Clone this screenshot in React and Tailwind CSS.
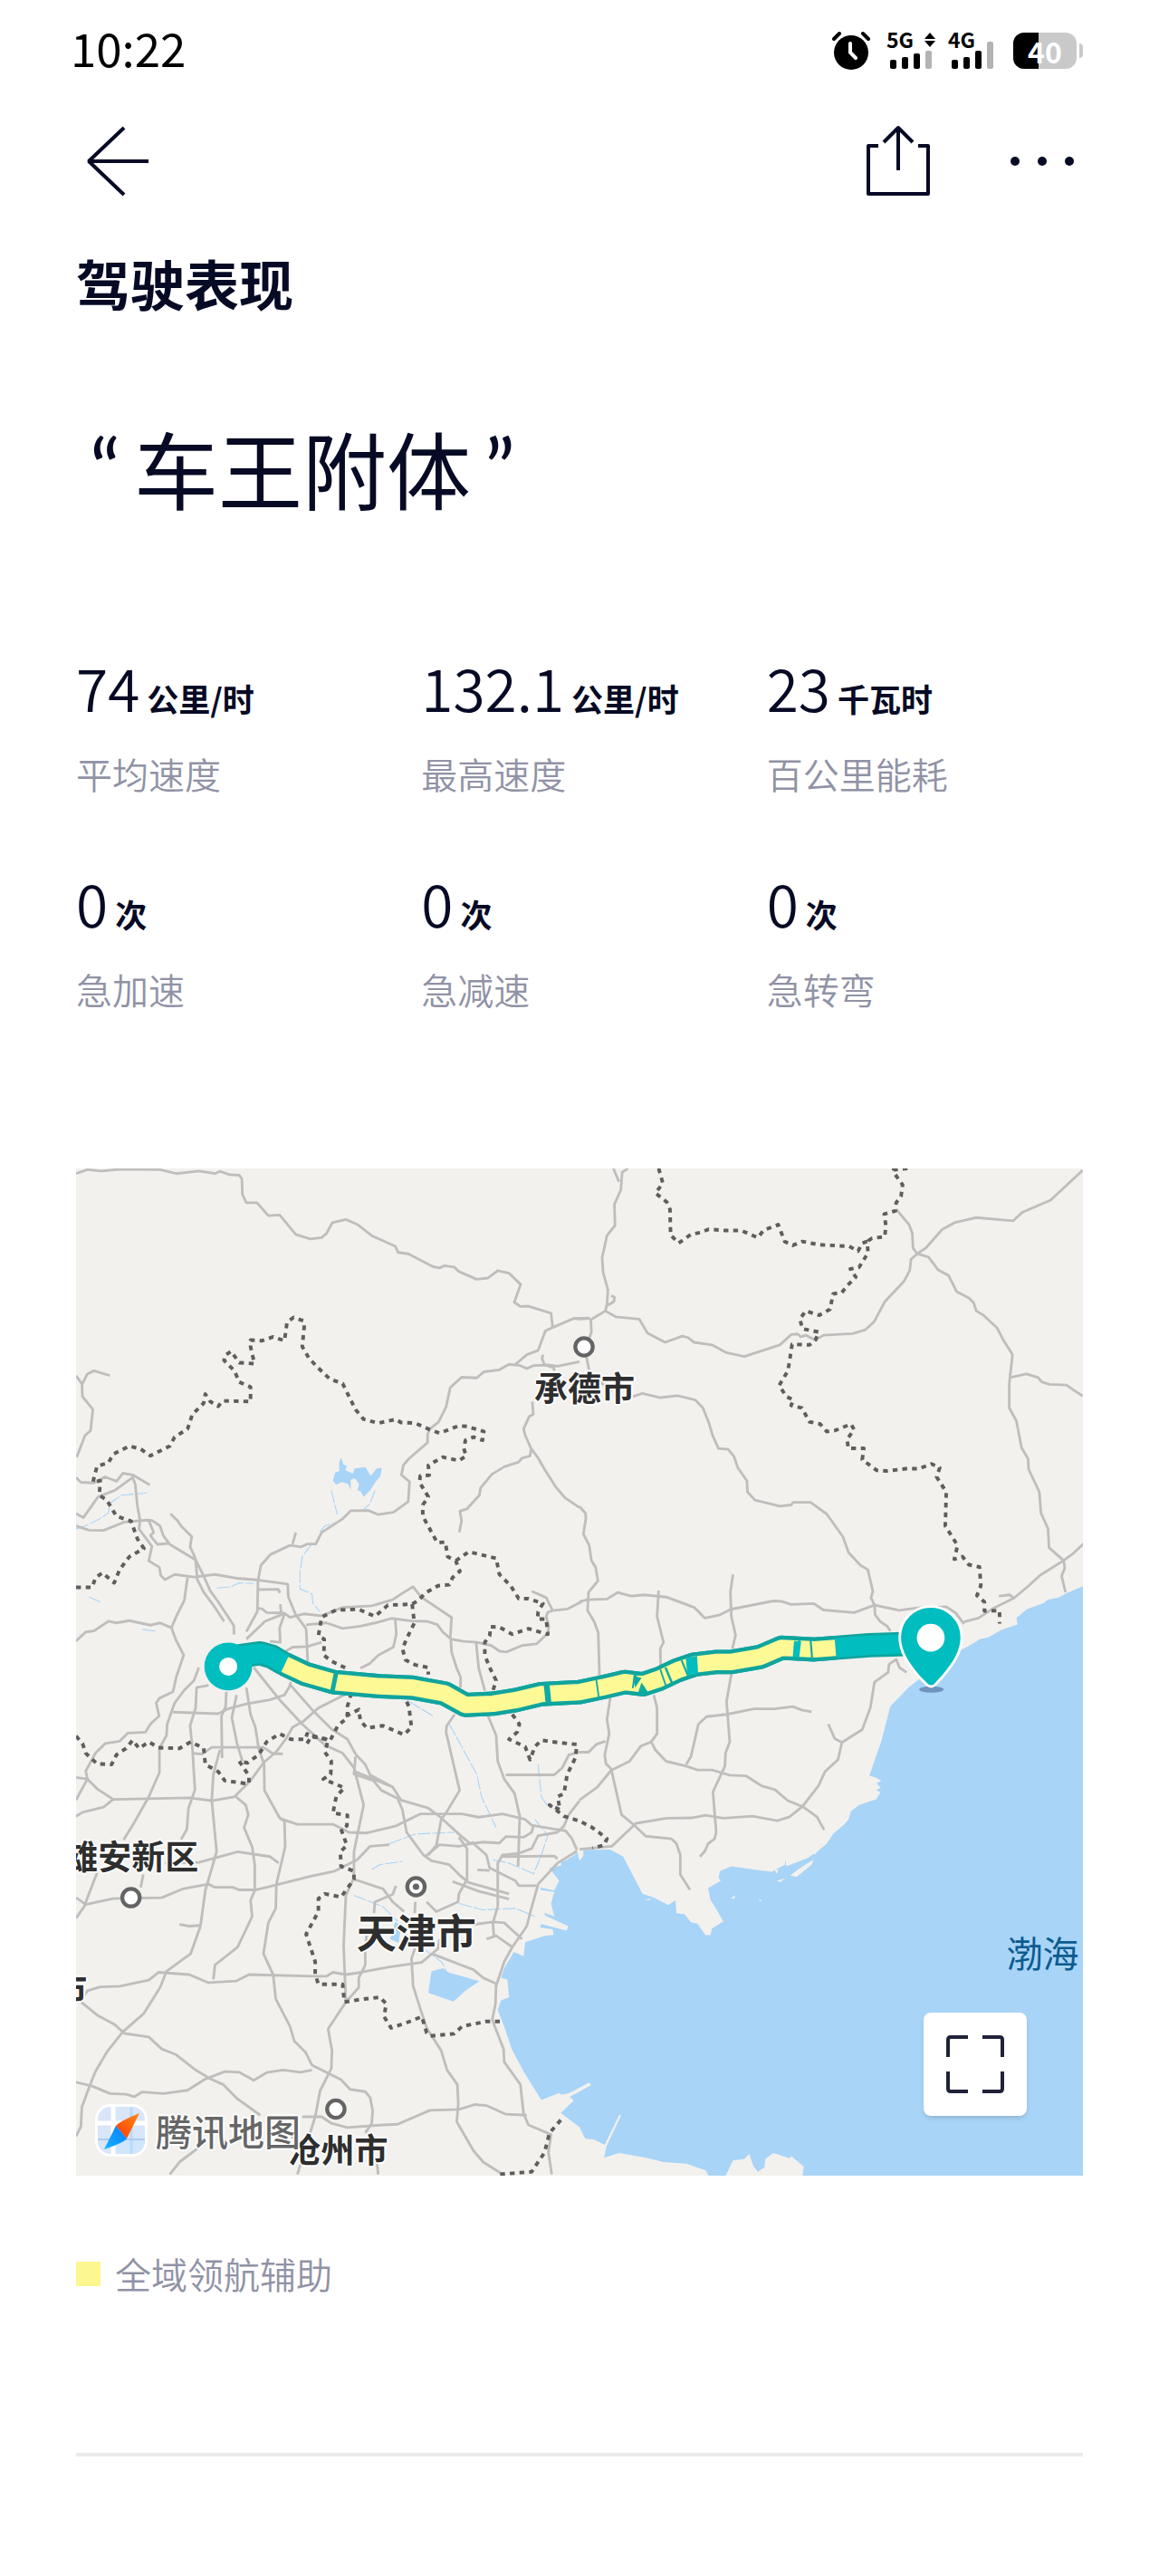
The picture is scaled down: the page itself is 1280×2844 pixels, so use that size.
import React from "react";

const FONT = "font-['Noto_Sans_CJK_SC','Noto_Sans',sans-serif]";

const STATS = [
  { value: "74", unit: "公里/时", label: "平均速度" },
  { value: "132.1", unit: "公里/时", label: "最高速度" },
  { value: "23", unit: "千瓦时", label: "百公里能耗" },
  { value: "0", unit: "次", label: "急加速" },
  { value: "0", unit: "次", label: "急减速" },
  { value: "0", unit: "次", label: "急转弯" },
];

/* ---------- Map data: polylines per tile (north-west, north-east, south-west, south-east) ---------- */

const TILES = [
  { key: "nw", x: 0, y: 0 },
  { key: "ne", x: 1568, y: 0 },
  { key: "sw", x: 0, y: 1568 },
  { key: "se", x: 1568, y: 1568 },
];

const ROADS = {
  nw: [
    "10,40 45,28 90,32 150,26 270,28 320,40 390,32 440,40 455,33 485,43 515,45 523,55 525,105 537,130 570,130 605,170 640,168 690,228 735,242 770,238 785,225 803,192 845,182 880,197 925,232 998,265 1007,284 1038,288 1115,328 1135,332 1150,325 1180,329 1195,343 1250,367 1285,363 1315,340 1350,348 1386,383 1366,438 1385,451 1410,450 1480,472 1485,516",
    "1600,488 1568,490 1550,488 1485,516 1462,527 1440,587 1405,600 1370,630",
    "1568,622 1500,636 1470,632 1425,634 1405,643 1385,634 1350,630 1320,647 1272,653 1250,672 1203,670 1168,702 1155,762 1132,808 1105,830 1098,845 1098,872 1040,922 1023,942 1017,972 1042,993 1038,1055 992,1088 945,1095 915,1082 860,1083 835,1108 770,1150 752,1186 725,1186 706,1195 672,1190 612,1218 582,1252 573,1300 571,1395 537,1457",
    "690,1150 680,1186",
    "1455,600 1452,612 1460,632 1488,640 1490,650",
    "1422,745 1425,785 1412,792 1395,830 1400,850 1418,890 1440,920 1460,955 1495,1010 1523,1043 1568,1073",
    "1418,893 1415,913 1390,920 1380,932 1335,947 1297,970 1262,1012 1258,1035 1220,1077 1198,1084 1203,1115 1196,1150",
    "10,665 28,690 30,730 62,770 55,835 38,850 12,917",
    "28,693 45,660 65,650 115,665",
    "10,980 25,995 65,997 100,978 135,992 155,967 185,972 238,1003",
    "10,1092 33,1104 78,1040 130,1020 185,980 193,1000 200,1070 208,1112 205,1140 245,1193 235,1238 268,1258 272,1283 285,1296 315,1280 375,1288 440,1280 508,1292 571,1297 665,1310 667,1350 690,1405 722,1448",
    "10,1130 50,1143 95,1144 160,1118 230,1112 245,1113 270,1130 280,1160 300,1187 380,1235",
    "235,1113 250,1150 240,1160 262,1187 295,1184",
    "302,1092 325,1115 335,1130 368,1163 363,1195 375,1220 380,1235 385,1295 405,1335 435,1375 468,1425",
    "380,1235 405,1285 425,1330 448,1362 498,1438 499,1466",
    "355,1290 345,1360 320,1410 305,1445 318,1480 343,1530 330,1568",
    "10,1486 40,1458 65,1455 110,1425 135,1430 175,1423 240,1437 270,1430 305,1445",
    "571,1327 636,1326 641,1337",
    "571,1385 585,1386 600,1398 655,1400 672,1413 715,1402 770,1408 835,1382 925,1377 990,1358 1017,1340 1053,1318 1078,1350 1172,1413 1168,1480",
    "642,1372 645,1400",
    "722,1436 785,1430 835,1447 890,1440 935,1430 985,1416 1050,1424 1095,1425 1128,1435 1145,1458 1170,1480 1210,1487 1250,1490 1295,1500 1320,1517 1342,1520 1390,1500 1435,1495 1470,1462 1473,1440 1465,1410 1470,1397 1485,1392 1530,1387 1575,1364",
    "722,1448 727,1550",
    "655,1402 640,1445 642,1490 610,1487",
    "537,1480 595,1425 650,1403",
    "655,1520 680,1505 725,1503 770,1490",
    "998,1420 1001,1465 992,1505 945,1530 920,1555 890,1570",
    "1420,1332 1465,1352 1485,1392",
    "1170,1480 1172,1520 1188,1570 1200,1598 1200,1630",
    "1248,1490 1256,1570 1275,1640",
  ],
  ne: [
    "105,24 122,65",
    "150,24 132,36 128,90 108,135 110,200 85,232 70,300 73,345 88,400 85,445 80,465 35,492 37,530 30,550",
    "-18,488 32,487",
    "80,465 112,483 185,490 210,533 265,562 318,543 335,547 355,562 410,570 455,594 510,606 620,570 655,538 675,536 685,545 700,540 730,555 755,540 845,535 885,523 912,498 945,436 1005,372 1022,340 1026,305 1045,288 1072,270 1122,213 1160,192 1228,176 1342,186 1370,160 1458,122 1557,30",
    "98,418 108,422 107,435 88,447",
    "980,150 1020,198 1030,225 1032,270 1045,288 1080,298 1110,338 1142,355 1167,405 1205,425 1220,440 1228,465 1250,478 1292,517 1310,552 1340,600 1330,690 1330,765 1352,805 1368,888 1388,922 1390,955 1423,1025 1428,1090 1450,1138 1453,1197 1498,1237 1502,1260 1492,1285 1504,1335",
    "1335,670 1383,660 1418,670 1430,684 1455,692 1507,694 1530,710 1557,728",
    "1560,1185 1528,1215 1498,1237 1425,1283 1390,1315 1345,1353 1280,1385 1235,1415 1190,1427",
    "985,1392 1040,1384 1135,1380 1165,1400 1190,1433",
    "1298,1347 1330,1343 1345,1353",
    "20,600 30,650 60,680 100,715",
    "165,730 195,720 250,733 303,727 358,740 382,765 400,810 412,850 430,890 460,893 478,915 490,950 518,990 520,1025 543,1050 620,1069 655,1065 662,1057 715,1057 765,1093 815,1163 833,1213 870,1252 892,1265 908,1332 902,1352 913,1375 915,1405 930,1425 952,1440 962,1455",
    "0,1070 18,1090 20,1105 12,1155 30,1190 37,1237 50,1258 57,1300 28,1335 25,1392 45,1425 58,1460 62,1600",
    "0,1364 25,1358 85,1356 118,1336 160,1347 200,1343 268,1350 355,1382 388,1415 435,1405 468,1388 600,1362 625,1363 655,1373 725,1370 755,1390 850,1398 913,1375 985,1390",
    "245,1330 240,1410 260,1490 250,1510 252,1600",
    "475,1280 467,1335 470,1410 483,1468 473,1510",
  ],
  sw: [
    "330,0 320,30 310,75 268,95 258,110 267,150 240,175 225,200 170,203 145,228 100,235 70,265 40,320 45,345 10,410",
    "390,0 375,40 345,70 315,110 292,175 290,210 268,250 268,325 235,400 190,480 157,533",
    "420,55 383,62 380,125 363,180 370,250 378,378 358,435 353,500 335,532",
    "475,75 473,120 460,150 462,280",
    "507,85 492,155 508,235 525,290",
    "537,62 550,145 565,185 575,250 592,300 593,380 640,465 655,475 657,555 630,670 628,745 605,790 590,885 620,950 628,1025 672,1110 685,1155 720,1190 740,1230 830,1275 858,1305 905,1312 920,1330 928,1370 925,1410 905,1440",
    "310,138 450,143 480,128 540,112 610,100 655,85 670,60 675,45",
    "560,0 640,100 710,175 780,240 835,265 870,310 900,425 870,570 870,650",
    "670,50 740,130 800,190 850,222 875,268 905,300 920,332 990,370 1015,410 1100,435 1140,465 1200,520 1230,545 1240,540",
    "850,80 800,105 760,125 715,165 680,185 660,220 630,260 590,295 550,350 500,400 430,412 360,403 125,408 75,375 45,345 10,340",
    "125,408 95,432 30,448 10,460",
    "650,267 620,267 590,247 430,247 400,268 370,265",
    "455,255 435,330 430,410 445,570 410,690 395,800 365,885 290,940 270,990 220,1070 155,1127 105,1190 70,1250 50,1300 28,1360 25,1420 10,1450",
    "505,400 535,425 543,455 530,495 555,555 563,610 563,690 550,720 555,770 510,865 440,920 435,965",
    "330,795 360,800 395,798",
    "285,605 390,603 510,570 610,585 637,605",
    "10,712 40,733 125,715 275,712 340,685 420,670 440,680 495,680 515,688 565,688 600,680 740,645 810,630 880,595 920,553 980,548",
    "75,635 50,700 35,740 10,775",
    "218,640 210,680",
    "640,467 695,485 805,485 855,510 910,512 1000,490 1075,453 1205,453 1255,463 1330,453 1400,470 1420,488 1490,500 1525,505 1545,530 1560,565",
    "875,275 870,330 930,350 955,380 1005,405 1020,440 1033,510 1085,580 1110,598 1165,610 1200,645 1225,665 1350,700",
    "870,320 930,345 990,370",
    "1175,662 1255,692 1350,716",
    "870,655 960,685 990,725 1025,755",
    "1000,675 990,702 935,725 932,760",
    "1090,585 1135,548 1195,553 1230,545 1270,540 1320,543 1340,523 1395,525 1420,510 1425,490",
    "1195,525 1220,560 1220,655 1195,700 1192,725 1125,755 1095,725",
    "1060,725 1058,760",
    "1060,865 1048,900 1053,985 1080,1070 1095,1115 1140,1185 1158,1245 1190,1290 1193,1350 1188,1405 1240,1495 1270,1530 1330,1568",
    "1235,540 1280,580 1290,620 1370,660 1380,675 1435,675",
    "1252,626 1290,628",
    "1310,985 1335,910 1360,865 1405,800 1415,760 1440,670 1500,605 1560,568",
    "1500,510 1440,520 1420,560 1380,575 1330,580 1315,605 1315,740 1300,790 1303,830",
    "1330,585 1490,583 1500,592",
    "1240,795 1300,787 1335,790 1390,840",
    "1280,840 1310,830 1360,865",
    "870,650 845,705 838,860 845,1035 790,1118 802,1185 800,1240 765,1310 750,1390 725,1470 695,1568",
    "910,820 905,870 905,920 885,960 885,990 845,1035",
    "25,1030 45,1000 85,988 145,986 235,967 265,943 360,950 420,975 505,970 545,950 745,955 785,955 805,943 845,950 880,945 975,927 1080,912 1130,870 1135,840",
    "1110,885 1240,935 1270,960 1310,978 1308,1040 1298,1090 1333,1180 1335,1220 1385,1290 1395,1380 1410,1415 1480,1445 1472,1500 1482,1568",
    "20,1030 75,1075 130,1105 160,1132 235,1143 275,1180 320,1198 380,1245 425,1272 465,1290 510,1335 580,1385",
    "10,1283 60,1295 115,1318 165,1320 190,1328 215,1313 280,1318 355,1308 410,1273 470,1250 515,1252 560,1277 600,1253 650,1245 705,1252 740,1245",
    "710,1390 770,1390 800,1410 850,1423 960,1415 1005,1413 1105,1370 1195,1367 1245,1352 1280,1355 1340,1382 1405,1385",
    "390,1485 330,1530 300,1568",
    "940,1520 945,1568",
    "1340,332 1490,332 1515,310 1535,270 1568,262",
    "1182,145 1157,180 1155,200 1197,380 1155,450 1140,470 1125,550 1100,580",
    "1285,150 1310,210 1315,290 1335,345 1367,390 1383,460 1378,615",
    "1568,412 1535,455 1520,490 1500,510",
  ],
  se: [
    "95,95 85,160 92,205 78,270 82,298 98,314 130,455 170,488 205,522 285,530 300,545 312,580 312,640 342,688",
    "0,262 28,262 52,238 80,228",
    "0,410 55,370 98,318 155,290 190,243 222,230 240,205 240,125 230,85",
    "222,230 235,255 268,290 330,305 365,317 410,317 465,333 515,335 565,367 605,378 645,412 690,430 735,462 757,502",
    "330,300 345,275 368,175 393,152 455,145 540,128 605,128 660,121 690,132 718,137",
    "470,20 455,105 465,230 452,265 450,305 413,385 423,510 418,530 398,545 388,568 373,585",
    "770,175 790,220 812,232 800,285 760,322 740,365 690,430 650,462 612,474 535,460 445,466 390,457 350,465 270,466 175,482 100,553 0,562",
    "812,232 875,192 900,125 913,45 955,15 958,-10 980,-25 990,0 1012,15",
  ],
};

const BORDERS = {
  nw: [
    "10,1320 60,1320 70,1290 92,1275 128,1306 145,1265 175,1225 220,1200 200,1170 180,1115 135,1100 105,1050 82,1035 85,990 62,995 75,945 110,935 125,908 175,883 210,892 240,913 300,883 315,855 355,830 370,785 405,750 410,722 425,745 450,760 463,743 550,745 550,700 515,685 500,650 468,618 470,603 490,590 515,625 562,628 550,575 550,555 585,557 620,545 655,557 663,500 683,485 713,495 716,515 710,575 730,610 755,637 795,675 835,690 855,730 875,770 900,800 945,812 1000,800 1015,810 1060,812 1105,832 1135,843 1195,820 1220,822 1272,838 1268,865 1240,855 1215,865 1210,890 1217,913 1195,928 1145,917 1100,942 1103,973 1075,975 1073,995 1100,1040 1083,1065 1083,1100 1105,1140 1128,1182 1153,1180 1160,1225 1185,1238 1198,1270 1175,1290 1165,1312 1130,1315 1090,1338 1070,1360 1050,1372 975,1375 935,1410 885,1388 815,1390 770,1412 760,1470 778,1480 777,1530 800,1548 855,1575",
    "1185,1238 1225,1210 1310,1230 1320,1280 1355,1315 1380,1355 1410,1355 1455,1370 1440,1395 1438,1418 1465,1418 1470,1465 1410,1448 1360,1465 1320,1443 1293,1442 1290,1470 1275,1490 1275,1530 1290,1568 1310,1608 1300,1640",
    "1050,1372 1057,1430 1035,1475 1020,1510 1030,1545 1060,1560 1100,1568 1100,1590",
  ],
  ne: [
    "245,24 258,70 235,100 270,128 280,150 282,230 307,255 345,228 375,222 400,212 450,216 500,216 552,238 570,215 615,198 635,250 660,262 690,250 740,260 835,265 862,280 875,255 890,250 893,285 865,330 838,335 855,360 830,385 812,408 785,412 775,460 742,478 700,465 682,490 690,520 740,530 730,555 712,570 658,568 650,620 645,650 618,695 640,730 662,740 655,757 688,765 712,808 745,815 765,838 790,835 840,815 850,832 828,862 832,890 880,890 875,925 920,958 950,960 1010,953 1050,953 1090,938 1115,950 1105,978 1135,1025 1132,1130 1170,1190 1160,1233 1185,1225 1205,1250 1238,1257 1242,1315 1230,1345 1253,1365 1253,1393 1300,1392 1300,1432",
    "1015,24 972,28 975,40 1000,75 995,110 980,130 978,155 943,165 948,200 945,235 905,240 890,250",
  ],
  sw: [
    "10,212 30,235 40,265 75,298 120,300 135,270 165,250 185,225 205,250 235,230 265,248 330,250 365,230 405,250 410,300 450,322 470,350 545,360 545,335 515,290 540,295 575,270 600,230 640,205 675,222 720,222 725,205 745,215 780,220 795,228 820,180 850,155 850,120 860,85",
    "845,150 885,130 890,165 910,187 960,180 1025,208 1048,185 1040,120 1030,100",
    "725,235 740,210 790,225 780,262 800,290 798,330 775,345 840,372 815,400 805,450 850,457 848,490 830,500 848,550 828,570 830,615 870,630 870,655 830,710 780,700 760,715 760,755 722,825 750,910 750,950 760,980 835,980 840,1035 890,1027 950,1020 970,1040 963,1080 985,1115 1030,1100 1080,1080 1095,1130 1105,1140 1180,1133 1205,1110 1280,1095 1330,1095",
    "1360,145 1382,175 1375,200 1350,222 1400,245 1415,285 1430,245 1450,225 1500,232 1560,238 1555,280 1530,330 1520,390 1500,400 1508,440 1475,425 1520,460 1568,475 1603,492 1628,510 1653,530 1643,550 1608,558",
    "1510,1400 1475,1440 1460,1500 1420,1560 1320,1568",
  ],
  se: [],
};

const STREAMS = {
  nw: [
    "10,1140 50,1125 80,1110 110,1090 115,1060 150,1035 230,1028",
    "800,1020 810,1060 818,1095",
    "935,1020 920,1060 900,1080",
    "765,1148 780,1130 805,1122",
    "740,1186 710,1225 703,1270 703,1325 740,1340 743,1370 765,1395",
    "445,1322 490,1318 515,1306 560,1308",
    "50,1350 85,1365",
    "215,1450 255,1455",
  ],
  ne: [],
  sw: [
    "1040,105 1115,150",
    "1165,175 1250,330 1265,400 1310,495",
    "1440,300 1450,400 1470,430",
    "980,545 1060,515 1180,510",
    "925,625 950,610 1020,600",
    "870,705 960,740 1005,785",
    "1085,870 1140,910 1155,935",
    "1300,595 1350,605 1430,640",
    "1195,730 1270,750 1370,745 1430,770",
    "1430,470 1470,520 1450,580 1425,640",
  ],
  se: [],
};

const ROUTE =
  "481,1563 520,1532 580,1524 615,1534 649,1554 720,1588 807,1613 950,1626 1050,1630 1150,1648 1215,1684 1300,1680 1370,1669 1450,1650 1568,1644 1640,1629 1708,1613 1764,1620 1815,1603 1870,1577 1923,1559 1988,1551 2035,1551 2128,1535 2193,1507 2296,1512 2464,1499 2650,1493";
const ROUTE_ASSISTED =
  "656,1558 720,1588 807,1613 950,1626 1050,1630 1150,1648 1215,1684 1300,1680 1370,1669 1450,1650 1568,1644 1640,1629 1708,1613 1764,1620 1815,1603 1870,1577 1923,1559 1988,1551 2035,1551 2128,1535 2193,1507 2296,1512 2360,1507";

const ROUTE_GAPS = [
  { d: "M815 1584 803 1642", w: 14 },
  { d: "M1466 1618 1472 1678", w: 18 },
  { d: "M1620 1606 1628 1662", w: 5 },
  { d: "M1742 1592 1733 1630 1738 1592 1752 1590", w: 5 },
  { d: "M1818 1574 1838 1632", w: 5 },
  { d: "M1834 1568 1856 1620", w: 7 },
  { d: "M1884 1546 1904 1594", w: 6 },
  { d: "M2248 1480 2243 1540", w: 4 },
  { d: "M2283 1480 2288 1542", w: 6 },
];

function Lines({ sets, ...rest }) {
  return (
    <g fill="none" strokeLinejoin="round" {...rest}>
      {TILES.map((t) => (
        <g key={t.key} transform={`translate(${t.x} ${t.y})`}>
          {sets[t.key].map((points, i) => (
            <polyline key={i} points={points} />
          ))}
        </g>
      ))}
    </g>
  );
}

function MapDrawing() {
  return (
    <svg viewBox="10 24 3116 3116" className="block h-full w-full" aria-hidden="true">
      <rect x="10" y="24" width="3116" height="3116" fill="#f2f1ee" />

      {/* Bohai Sea */}
      <path
        fill="#a8d4f7"
        d="M3130 1315 3078 1337 3048 1352 3018 1358 3005 1368 2986 1375 2953 1387 2920 1415 2924 1435 2898 1443 2873 1452 2833 1475 2808 1480 2775 1500 2718 1530 2618 1605 2588 1628 2530 1688 2503 1793 2465 1903 2483 1908 2502 1918 2488 1926 2500 1940 2486 1948 2500 1953 2486 1976 2433 1993 2408 2013 2400 2038 2388 2053 2353 2083 2333 2113 2303 2138 2273 2158 2208 2183 2206 2162 2204 2178 2163 2200 2128 2196 2038 2183 2003 2198 1998 2218 2005 2228 1966 2250 1973 2286 1993 2318 2013 2353 1978 2376 1973 2396 1958 2396 1933 2360 1913 2356 1893 2331 1868 2328 1865 2288 1843 2303 1798 2280 1763 2268 1703 2153 1663 2131 1580 2132 1580 2150 1568 2166 1562 2140 1550 2150 1525 2165 1510 2170 1512 2180 1475 2188 1505 2228 1490 2258 1445 2248 1445 2256 1490 2262 1480 2298 1490 2338 1455 2325 1455 2332 1533 2368 1528 2382 1450 2362 1446 2372 1485 2378 1488 2395 1460 2398 1400 2418 1395 2461 1365 2448 1335 2498 1325 2528 1345 2533 1350 2588 1325 2598 1315 2628 1335 2678 1358 2748 1395 2818 1450 2906 1505 2884 1512 2890 1535 2885 1598 2852 1604 2860 1538 2896 1550 2908 1510 2946 1568 2990 1586 3026 1613 3028 1646 3045 1692 2950 1696 2955 1652 3048 1644 3085 1690 3070 1768 3083 1828 3098 1898 3103 1958 3123 1970 3145 2018 3145 2043 3093 2078 3088 2093 3073 2106 3110 2120 3128 2140 3115 2143 3088 2168 3070 2218 3086 2224 3080 2262 3112 2258 3145 3130 3145Z"
      />
      {/* Islands and shoals */}
      <g fill="#f2f1ee">
        <path d="M2220 2212 2245 2192 2292 2162 2286 2178 2240 2216Z" />
        <path d="M2172 2192 2184 2194 2178 2206ZM2178 2228 2204 2220 2190 2232ZM2036 2282 2050 2272 2046 2284ZM2124 2286 2132 2288 2126 2292ZM1770 2286 1796 2282 1780 2288ZM2282 2138 2304 2136 2298 2146Z" />
        <path d="M1440 2250 1455 2340 1462 2340 1448 2250Z" />
      </g>
      {/* Inland water */}
      <g fill="#a8d4f7">
        <path d="M805 990 812 965 825 960 824 935 830 918 838 940 848 944 844 958 866 968 872 952 905 948 922 975 940 952 956 950 952 975 938 992 920 1020 900 1040 890 1022 880 1020 886 1000 872 982 860 988 860 1020 852 1000 832 994 815 1002Z" />
        <path d="M1110 2508 1145 2498 1165 2512 1258 2538 1215 2568 1178 2601 1100 2575Z" />
        <path d="M998 2355 1016 2368 1008 2420 982 2408Z" />
      </g>
      <Lines sets={STREAMS} stroke="#a8d4f7" strokeWidth="3" strokeDasharray="40 6" />

      <Lines sets={ROADS} stroke="#bfbebc" strokeWidth="8" />
      <Lines sets={BORDERS} stroke="#5f5e5c" strokeWidth="11" strokeDasharray="15 15" />

      {/* City markers */}
      {[
        [1582, 576],
        [180, 2280],
        [814, 2934],
        [1062, 2246],
      ].map(([x, y]) => (
        <circle key={x} cx={x} cy={y} r="27" fill="#fff" stroke="#656464" strokeWidth="12" />
      ))}
      <circle cx="1062" cy="2246" r="10" fill="#656464" />

      {/* Driven route */}
      <g fill="none" strokeLinejoin="round">
        <polyline points={ROUTE} stroke="#10a49e" strokeWidth="75" />
        <polyline points={ROUTE} stroke="#00bdbf" strokeWidth="60" />
        <polyline points={ROUTE_ASSISTED} stroke="#10a49e" strokeWidth="75" />
        <polyline points={ROUTE_ASSISTED} stroke="#fdf994" strokeWidth="51" />
        <g stroke="#10aaa4">
          {ROUTE_GAPS.map((g) => (
            <path key={g.d} d={g.d} strokeWidth={g.w} />
          ))}
        </g>
      </g>
      <path d="M1736 1594 1760 1600 1740 1630ZM1760 1614 1784 1650 1748 1650Z" fill="#10aaa4" />
      <path d="M1897 1539 1932 1532 1935 1586 1902 1594ZM2232 1486 2254 1486 2248 1536 2228 1536Z" fill="#00bdbf" />

      {/* Start */}
      <circle cx="481" cy="1565" r="74" fill="#00bdbf" />
      <circle cx="481" cy="1565" r="28" fill="#fff" />

      {/* Destination */}
      <ellipse cx="2657" cy="1636" rx="38" ry="10" fill="#6f93bd" />
      <path
        d="M2655 1379C2708 1379 2751 1422 2751 1475 2751 1520 2725 1556 2692 1596L2668 1622Q2656 1632 2644 1622L2618 1596C2585 1556 2559 1520 2559 1475 2559 1422 2602 1379 2655 1379Z"
        fill="#00bdbf"
        stroke="#fff"
        strokeWidth="8"
      />
      <circle cx="2655" cy="1476" r="43" fill="#fff" />
    </svg>
  );
}

const HALO =
  "[text-shadow:2px_0_#fff,-2px_0_#fff,0_2px_#fff,0_-2px_#fff,1px_1px_#fff,-1px_-1px_#fff,1px_-1px_#fff,-1px_1px_#fff]";

/* Label positions are shares of the map's own width and height. */
const PLACES = [
  { name: "承德市", x: 50.5, y: 21.7, kind: "city" },
  { name: "雄安新区", x: 5.5, y: 68.2, kind: "city" },
  { name: "天津市", x: 33.8, y: 75.7, kind: "metro" },
  { name: "沧州市", x: 26.0, y: 97.3, kind: "city" },
  { name: "保定市", x: -3.9, y: 81.3, kind: "city" },
  { name: "渤海", x: 96.0, y: 77.8, kind: "sea" },
];

const PLACE_STYLE = {
  city: `text-[37px] font-bold text-[#2e2e2e] ${HALO}`,
  metro: `text-[44px] font-bold text-[#2e2e2e] ${HALO}`,
  sea: "text-[40px] text-[#0b5b90]",
};

function TripMap() {
  return (
    <section aria-label="行程地图" className="relative mt-[168px] aspect-square w-full overflow-hidden">
      <MapDrawing />
      {PLACES.map((p) => (
        <span
          key={p.name}
          style={{ left: `${p.x}%`, top: `${p.y}%` }}
          className={`absolute -translate-x-1/2 -translate-y-1/2 leading-none whitespace-nowrap ${PLACE_STYLE[p.kind]}`}
        >
          {p.name}
        </span>
      ))}

      <div className="absolute bottom-[20px] left-[20px] flex items-center gap-2">
        <svg viewBox="0 0 60 60" className="h-[60px] w-[60px]" aria-hidden="true">
          <defs>
            <clipPath id="logoClip">
              <rect x="4" y="4" width="52" height="52" rx="14" />
            </clipPath>
            <linearGradient id="needleRed" x1="0" y1="1" x2="1" y2="0">
              <stop offset="0" stopColor="#ff3a00" />
              <stop offset="1" stopColor="#ff8a1a" />
            </linearGradient>
            <linearGradient id="needleBlue" x1="1" y1="0" x2="0" y2="1">
              <stop offset="0" stopColor="#0a7bff" />
              <stop offset="1" stopColor="#14b4ff" />
            </linearGradient>
          </defs>
          <rect x="1" y="1" width="58" height="58" rx="17" fill="#fff" />
          <g clipPath="url(#logoClip)">
            <rect width="60" height="60" fill="#d9e5f8" />
            <rect x="24" y="40" width="36" height="20" fill="#cfe6fc" />
            <path d="M21 0V60M0 22H60" stroke="#fff" strokeWidth="5" />
            <path d="M41 0V60" stroke="#b5dcfb" strokeWidth="3" />
            <path d="M0 40H60" stroke="#aecbf0" strokeWidth="2" />
          </g>
          <path d="M50 11 36 39 24 25Q28 20 50 11Z" fill="url(#needleRed)" />
          <path d="M11 51 24 25 36 39Q34 43 11 51Z" fill="url(#needleBlue)" />
        </svg>
        <span className={`text-[40px] leading-none font-medium text-[#666] ${HALO}`}>腾讯地图</span>
      </div>

      <button
        type="button"
        aria-label="全屏"
        className="absolute right-[62px] bottom-[66px] flex h-[114px] w-[114px] items-center justify-center rounded-lg bg-white shadow-md"
      >
        <svg viewBox="0 0 64 64" className="h-16 w-16" fill="none" stroke="#20223a" strokeWidth="4" aria-hidden="true">
          <path d="M2 24V5Q2 2 5 2H24M40 2H59Q62 2 62 5V24M62 40V59Q62 62 59 62H40M24 62H5Q2 62 2 59V40" />
        </svg>
      </button>
    </section>
  );
}

const BAR = {
  10: "h-[10px] bg-black",
  13: "h-[13px] bg-black",
  17: "h-[17px] bg-black",
  20: "h-[20px] bg-black",
  "20off": "h-[20px] bg-[#b3b3b3]",
  "30off": "h-[30px] bg-[#b3b3b3]",
};

function Signal({ name, bars, data }) {
  return (
    <div className="relative h-10 w-[54px]">
      <span className="absolute top-0 left-0 text-[23px] leading-[14px] font-bold text-black">{name}</span>
      {data && (
        <svg viewBox="0 0 12 16" className="absolute top-0 right-0 h-4 w-3" aria-hidden="true">
          <path d="M6 0 12 7H0ZM6 16 0 9H12Z" />
        </svg>
      )}
      <div className="absolute bottom-0 left-1 flex items-end gap-1.5">
        {bars.map((b) => (
          <span key={b} className={`w-[7px] rounded-xs ${BAR[b]}`} />
        ))}
      </div>
    </div>
  );
}

function StatusBar() {
  return (
    <div className="flex h-28 items-center justify-between pr-[84px] pl-[78px]">
      <time className="pb-2 text-[51px] leading-none text-black">10:22</time>
      <div className="flex items-center">
        <svg viewBox="0 0 42 44" className="mr-[18px] h-[44px] w-[42px]" aria-hidden="true">
          <circle cx="21" cy="24" r="19" />
          <path d="M2 9 8 3M34 3 40 9" stroke="#000" strokeWidth="4" strokeLinecap="round" />
          <path d="M20 14V24L26 30" fill="none" stroke="#fff" strokeWidth="4" strokeLinecap="round" />
        </svg>
        <Signal name="5G" data bars={["10", "13", "17", "20off"]} />
        <div className="w-[14px]" />
        <Signal name="4G" bars={["10", "13", "20", "30off"]} />
        <div className="relative ml-[18px] flex h-10 w-[70px] items-center justify-center rounded-xl bg-[#c9c9c9]">
          <span className="absolute inset-y-0 left-0 w-2/5 rounded-l-xl bg-black" />
          <span className="relative text-[32px] leading-10 font-bold text-white">40</span>
        </div>
        <span className="ml-[3px] h-4 w-1 rounded-r-sm bg-[#c9c9c9]" />
      </div>
    </div>
  );
}

function NavBar() {
  return (
    <nav className="flex h-32 items-center justify-between pt-1 pr-[82px] pl-[94px]">
      <button type="button" aria-label="返回">
        <svg viewBox="0 0 72 78" className="h-[78px] w-[72px]" fill="none" stroke="#060a24" strokeWidth="4" strokeLinejoin="bevel" aria-hidden="true">
          <path d="M43 2 4 39 43 76M4 39H70" />
        </svg>
      </button>
      <div className="flex items-center gap-[78px]">
        <button type="button" aria-label="分享">
          <svg viewBox="0 0 72 80" className="h-20 w-[72px]" fill="none" stroke="#060a24" strokeWidth="4" strokeLinejoin="round" aria-hidden="true">
            <path d="M14 23H3V76H69V23H58M36 50V4M20 19 36 3 52 19" />
          </svg>
        </button>
        <button type="button" aria-label="更多">
          <svg viewBox="0 0 92 20" className="h-5 w-[92px]" fill="#060a24" aria-hidden="true">
            <circle cx="15" cy="10" r="5" />
            <circle cx="45" cy="10" r="5" />
            <circle cx="75" cy="10" r="5" />
          </svg>
        </button>
      </div>
    </nav>
  );
}

export default function App() {
  return (
    <div className={`min-h-screen bg-white text-[#060a24] ${FONT}`}>
      <StatusBar />
      <NavBar />
      <main className="px-[84px]">
        <h1 className="mt-9 text-[60px] leading-[72px] font-bold">驾驶表现</h1>

        <p className="mt-[120px] flex text-[93px] leading-[96px]">
          <span className="w-16 text-center font-['Lato',sans-serif]">“</span>
          <span>车王附体</span>
          <span className="w-16 text-center font-['Lato',sans-serif]">”</span>
        </p>

        <dl className="mt-36 grid grid-cols-3 gap-x-8 gap-y-[62px]">
          {STATS.map((s) => (
            <div key={s.label} className="flex flex-col-reverse">
              <dt className="mt-4 text-[40px] leading-[60px] font-[350] text-[#9092a5]">{s.label}</dt>
              <dd className="flex items-baseline gap-2 whitespace-nowrap">
                <span className="text-[64px] leading-[100px] font-[350]">{s.value}</span>
                <span className="text-[35px] leading-[50px] font-bold">{s.unit}</span>
              </dd>
            </div>
          ))}
        </dl>

        <TripMap />

        <div className="mt-[78px] flex items-center gap-4">
          <span className="h-[27px] w-[27px] bg-[#fdf78f]" />
          <span className="text-[40px] leading-[60px] font-[350] text-[#9092a5]">全域领航辅助</span>
        </div>

        <hr className="mt-[168px] border-0 border-t-4 border-[#ebebeb]" />
      </main>
    </div>
  );
}
